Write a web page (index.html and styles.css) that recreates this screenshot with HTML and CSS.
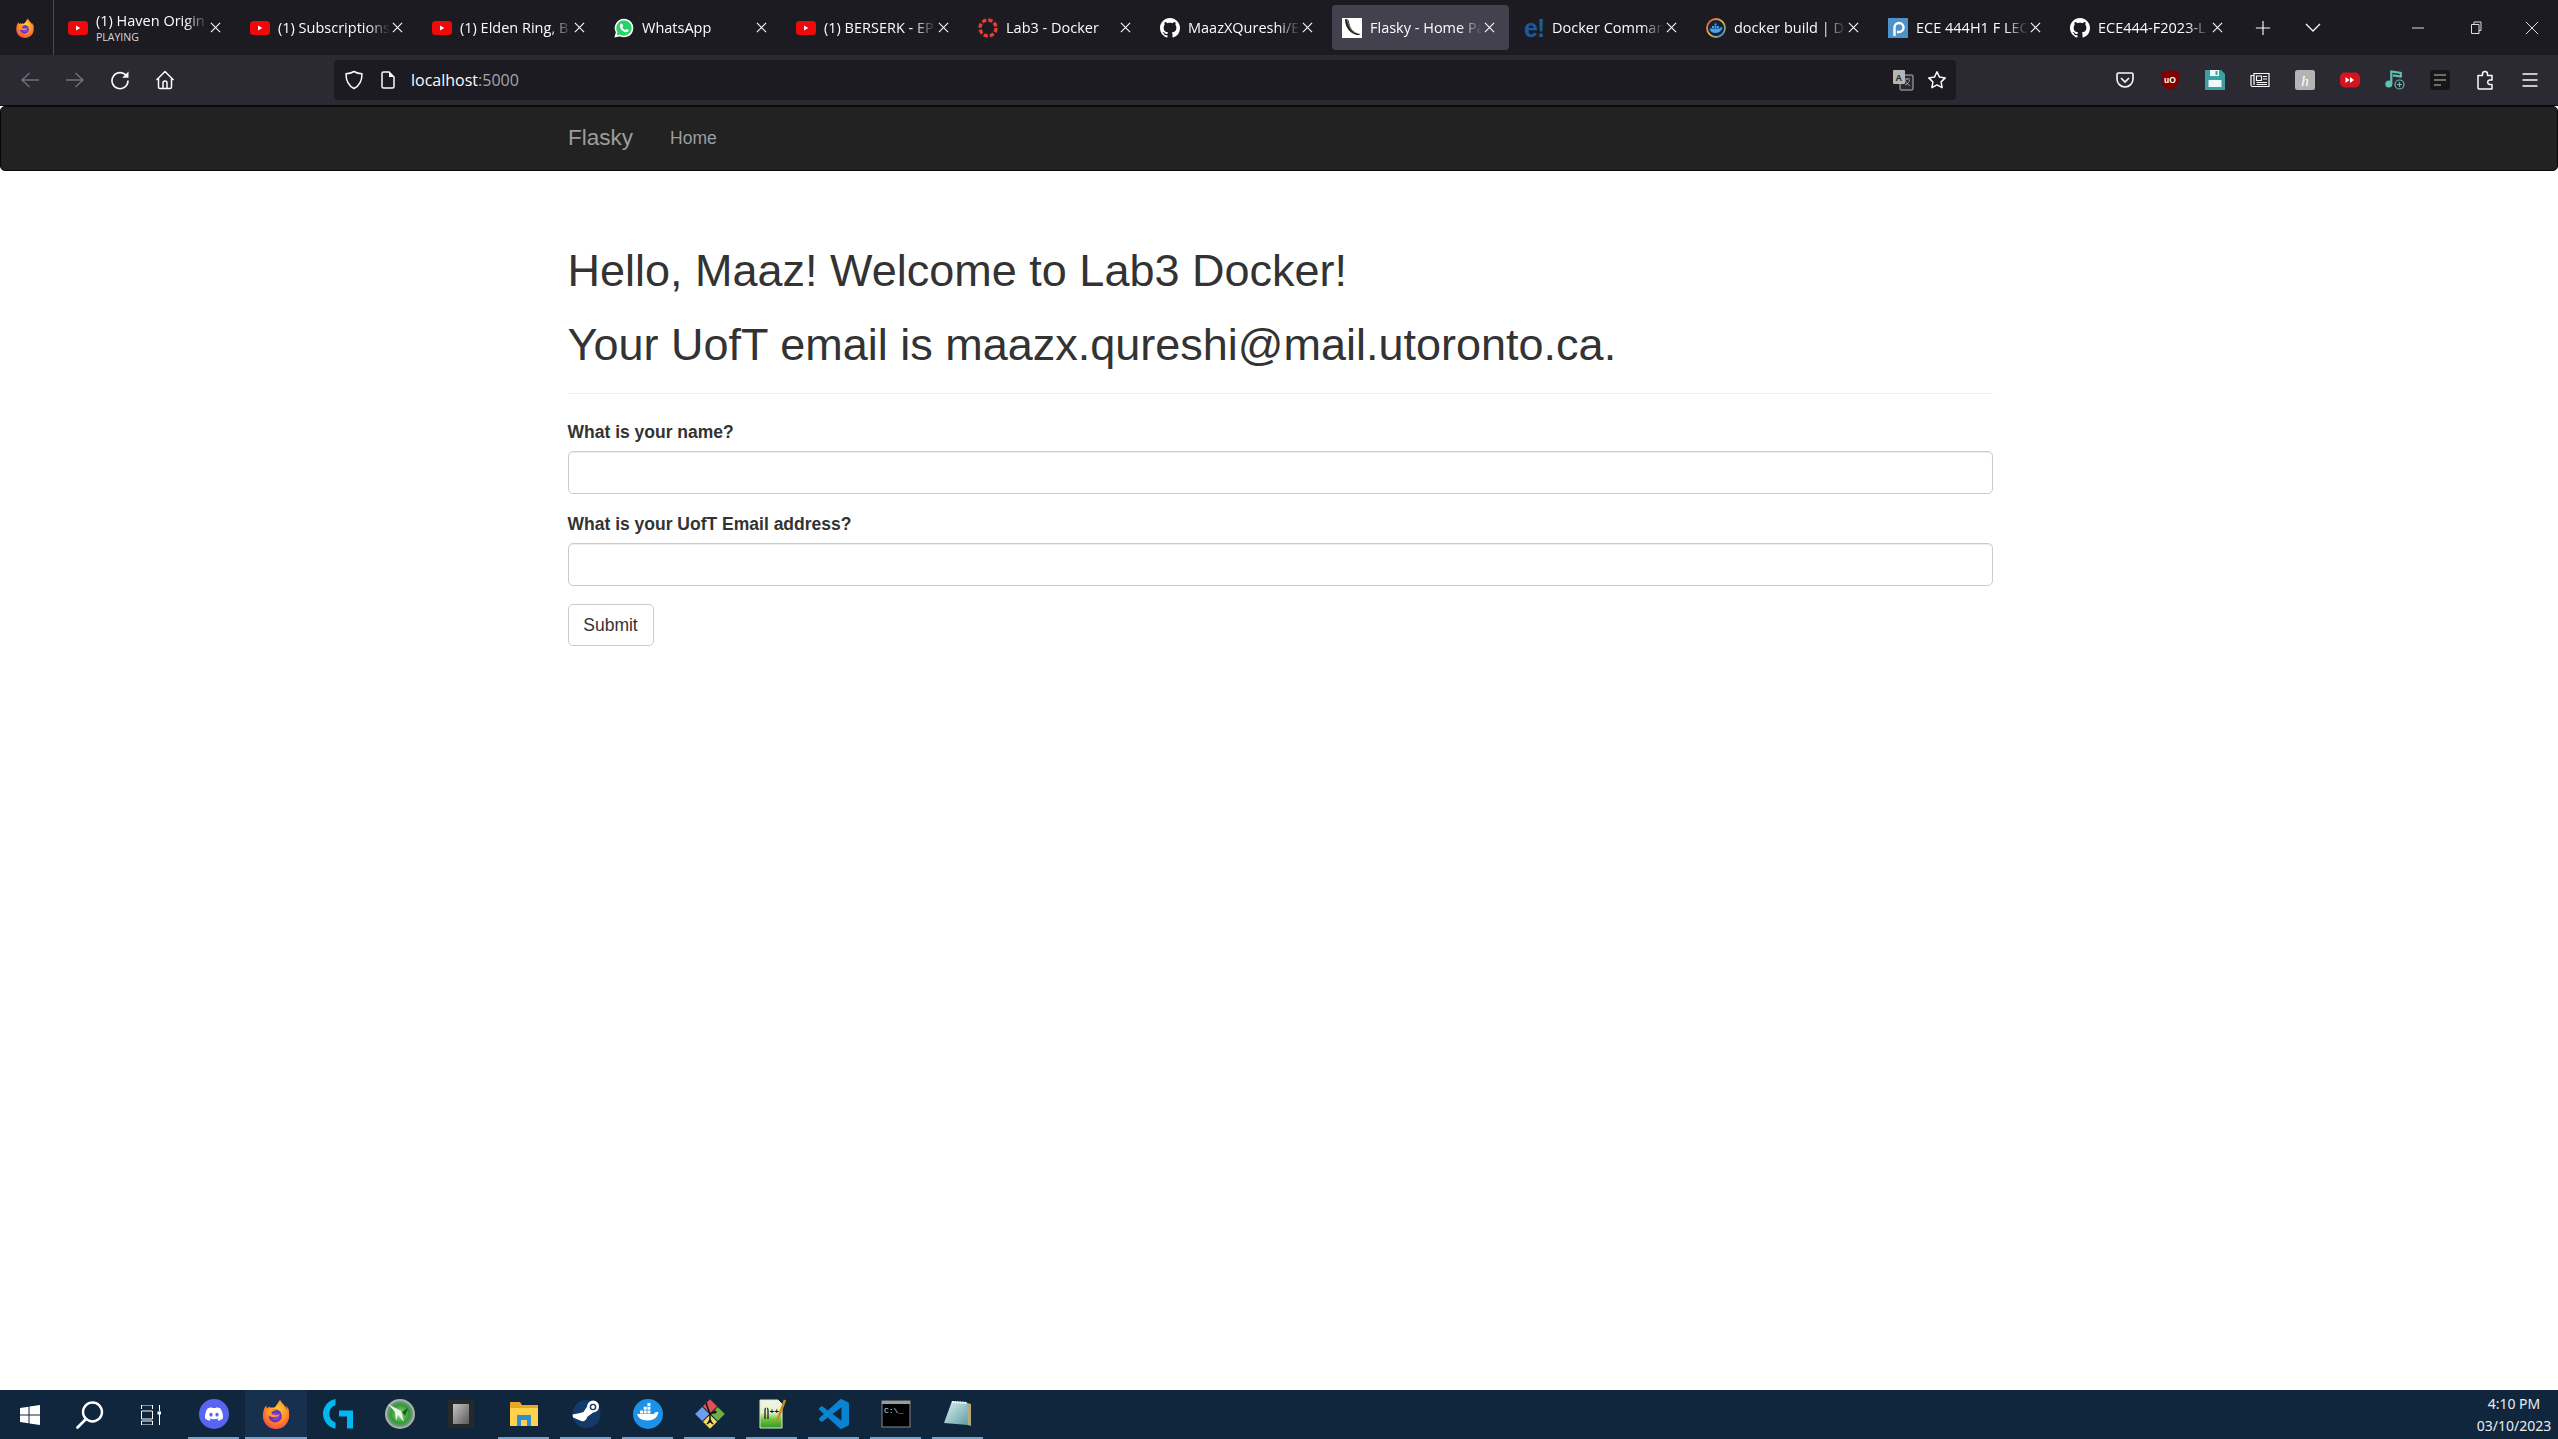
FILE: index.html
```html
<!DOCTYPE html>
<html lang="en">
<head>
<meta charset="utf-8">
<title>Flasky - Home Page</title>
<link rel="stylesheet" href="styles.css">
</head>
<body>
<svg class="defs" aria-hidden="true">
  <defs>
    <radialGradient id="ffg" cx="0.55" cy="0.35" r="0.8"><stop offset="0" stop-color="#ffd43a"/><stop offset="0.5" stop-color="#ff8a2a"/><stop offset="1" stop-color="#f0304c"/></radialGradient>
    <linearGradient id="nppg" x1="0" y1="0" x2="0" y2="1"><stop offset="0" stop-color="#f4f4e8"/><stop offset="0.45" stop-color="#e6f0c8"/><stop offset="0.7" stop-color="#6fc43a"/><stop offset="1" stop-color="#2f9a22"/></linearGradient>
    <linearGradient id="npg" x1="0" y1="0" x2="1" y2="1"><stop offset="0" stop-color="#dff2f2"/><stop offset="1" stop-color="#5f9ea6"/></linearGradient>
    <radialGradient id="xbg"><stop offset="0" stop-color="#9be86a"/><stop offset="0.65" stop-color="#2f9a3a"/><stop offset="1" stop-color="#8a9a92"/></radialGradient>
    <linearGradient id="chipg" x1="0" y1="0" x2="1" y2="1"><stop offset="0" stop-color="#c4c4c4"/><stop offset="1" stop-color="#5a5a5a"/></linearGradient>
    <linearGradient id="dockring" x1="0" y1="0" x2="1" y2="1"><stop offset="0" stop-color="#e8503a"/><stop offset="0.5" stop-color="#f2b234"/><stop offset="1" stop-color="#2f8fe0"/></linearGradient>
    <symbol id="firefox" viewBox="0 0 32 32">
      <path fill="url(#ffg)" d="M29.6 11.200c-.6-1.500-1.900-3.200-3-3.800.8 1.600 1.300 3.100 1.400 4.300-1.700-4.300-4.600-6-7-9.700-.1-.2-.3-.4-.4-.700-.1-.1-.1-.2-.2-.4 0 0 0 0 0 0C17.300 4.300 16.800 8.300 13.600 9.200c-1.300-.4-2.800-.3-3.900.2-.3-.4-.5-.9-.6-1.500-1.100.5-1.900 1.400-2.500 2.200-.6-.8-.8-2.100-.8-3.200C3.800 8.300 2.700 11.300 2.300 14.800 2 16 1.900 17 2 18c0 7.700 6.300 14 14 14s14-6.300 14-14c0-2.400-.2-4.700-.4-6.800z"/>
      <circle cx="15.200" cy="18" r="7" fill="#6a33b8"/>
      <circle cx="15.800" cy="18.600" r="4" fill="#8f3fd0"/>
      <path fill="#ff9a2a" d="M6 15c3-4 8-5 11-3-3 0-5 1-6 3 2 3 6 3 9 1-.5 2-2 3-4 3-5 1-9-1-10-4z"/>
    </symbol>
    <symbol id="yt" viewBox="0 0 20 14">
      <rect width="20" height="14" rx="3.500" fill="#ee0a0a"/>
      <path d="M8 4.500v5l4.300-2.500z" fill="#fff"/>
    </symbol>
    <symbol id="gh" viewBox="0 0 16 16">
      <path fill="#fff" d="M8 0C3.580 0 0 3.580 0 8c0 3.540 2.290 6.530 5.470 7.590.4.070.55-.17.55-.38 0-.19-.01-.82-.01-1.490-2.010.37-2.530-.49-2.690-.94-.09-.23-.48-.94-.82-1.130-.28-.15-.68-.52-.01-.53.63-.01 1.080.58 1.230.82.72 1.210 1.870.87 2.330.66.07-.52.28-.87.51-1.070-1.780-.2-3.640-.89-3.640-3.950 0-.87.31-1.590.82-2.150-.08-.2-.36-1.020.08-2.120 0 0 .67-.21 2.200.82.64-.18 1.320-.27 2-.27.68 0 1.360.09 2 .27 1.530-1.040 2.200-.82 2.200-.82.44 1.100.16 1.920.08 2.120.51.56.82 1.270.82 2.150 0 3.070-1.870 3.750-3.650 3.950.29.25.54.73.54 1.480 0 1.070-.01 1.930-.01 2.200 0 .21.15.46.55.38A8.013 8.013 0 0016 8c0-4.420-3.580-8-8-8z"/>
    </symbol>
    <symbol id="x" viewBox="0 0 12 12">
      <path d="M1 1l10 10M11 1L1 11" stroke="#fbfbfe" stroke-width="1.200" fill="none"/>
    </symbol>
  </defs>
</svg>

<header class="browser">
  <div class="tabstrip">
    <div class="ff-cell"><svg class="ic20"><use href="#firefox"/></svg></div>
    <div class="tabs">
      <div class="tab">
        <svg class="fav yt"><use href="#yt"/></svg>
        <div class="title-stack"><span class="title">(1) Haven Origin</span><span class="sub">PLAYING</span></div>
        <svg class="close"><use href="#x"/></svg>
      </div>
      <div class="tab"><svg class="fav yt"><use href="#yt"/></svg><span class="title">(1) Subscriptions</span><svg class="close"><use href="#x"/></svg></div>
      <div class="tab"><svg class="fav yt"><use href="#yt"/></svg><span class="title">(1) Elden Ring, B</span><svg class="close"><use href="#x"/></svg></div>
      <div class="tab">
        <svg class="fav" viewBox="0 0 20 20"><path fill="#25d366" stroke="#fff" stroke-width="1.600" d="M10 1.500a8.500 8.500 0 0 0-7.300 12.800L1.500 18.500l4.300-1.100A8.500 8.500 0 1 0 10 1.500z"/><path fill="#fff" d="M7.300 5.500c-.5 0-1.500 1-1.500 2.500 0 2.800 3.500 6.300 6.500 6.300 1.400 0 2.400-1 2.400-2 0-.4-2-1.300-2.300-1.300-.4 0-.8 1-1.200 1-.8 0-2.800-1.900-2.800-2.700 0-.4.800-.9.800-1.300 0-.3-.8-2.500-1.900-2.500z"/></svg>
        <span class="title">WhatsApp</span><svg class="close"><use href="#x"/></svg>
      </div>
      <div class="tab"><svg class="fav yt"><use href="#yt"/></svg><span class="title">(1) BERSERK - EP</span><svg class="close"><use href="#x"/></svg></div>
      <div class="tab">
        <svg class="fav" viewBox="0 0 20 20"><circle cx="10" cy="10" r="8" fill="none" stroke="#e13f36" stroke-width="3.400" stroke-dasharray="4.300 2"/></svg>
        <span class="title">Lab3 - Docker</span><svg class="close"><use href="#x"/></svg>
      </div>
      <div class="tab"><svg class="fav"><use href="#gh"/></svg><span class="title">MaazXQureshi/E</span><svg class="close"><use href="#x"/></svg></div>
      <div class="tab active">
        <svg class="fav" viewBox="0 0 20 20"><rect width="20" height="20" fill="#fff"/><path d="M3 1c0 6 3 14 12 16 2 .4 3-.4 3-1-7-1-10-6-11-12-.4-2-1-3-4-3z" fill="#222"/><path d="M5 2c2 4 2 9 8 13" stroke="#888" fill="none"/></svg>
        <span class="title">Flasky - Home Pa</span><svg class="close"><use href="#x"/></svg>
      </div>
      <div class="tab"><span class="fav efav">e!</span><span class="title">Docker Comman</span><svg class="close"><use href="#x"/></svg></div>
      <div class="tab">
        <svg class="fav" viewBox="0 0 20 20"><circle cx="10" cy="10" r="9" fill="#12233c" stroke="url(#dockring)" stroke-width="1.800"/><path fill="#4aa3e8" d="M3.500 10.500h10c.5-1 1.500-1.500 3-1.200-.5 3-3 5.700-7 5.700-3.500 0-5.500-1.800-6-4.500zM6 8h2v2H6zM8.500 8h2v2h-2zM11 8h2v2h-2zM8.500 5.500h2v2h-2z"/></svg>
        <span class="title">docker build | Do</span><svg class="close"><use href="#x"/></svg>
      </div>
      <div class="tab">
        <svg class="fav" viewBox="0 0 20 20"><rect width="20" height="20" fill="#4d93c9"/><path d="M6.500 18V9.500a4.500 4.500 0 1 1 4.500 4.500H9" fill="none" stroke="#fff" stroke-width="2.400"/></svg>
        <span class="title">ECE 444H1 F LEC</span><svg class="close"><use href="#x"/></svg>
      </div>
      <div class="tab"><svg class="fav"><use href="#gh"/></svg><span class="title">ECE444-F2023-L</span><svg class="close"><use href="#x"/></svg></div>
    </div>
    <div class="strip-btn plus"><svg viewBox="0 0 18 18"><path d="M9 1v16M1 9h16" stroke="#fbfbfe" stroke-width="1.300"/></svg></div>
    <div class="strip-btn chev"><svg viewBox="0 0 16 10"><path d="M1 1l7 7 7-7" fill="none" stroke="#fbfbfe" stroke-width="1.300"/></svg></div>
    <div class="win-ctrls">
      <svg viewBox="0 0 14 14"><path d="M1 7h12" stroke="#ddd" stroke-width="1"/></svg>
      <svg viewBox="0 0 14 14"><path d="M3.500 3.500h7.500v9H3.500zM6 3.500V1h7v8.500h-2" fill="none" stroke="#ddd" stroke-width="1"/></svg>
      <svg viewBox="0 0 14 14"><path d="M1 1l12 12M13 1L1 13" stroke="#ddd" stroke-width="1"/></svg>
    </div>
  </div>

  <div class="toolbar">
    <div class="nav-btns">
      <div class="tb-btn"><svg viewBox="0 0 20 20"><path d="M19 10H2M9.500 3L2 10l7.500 7" fill="none" stroke="#73727b" stroke-width="1.400"/></svg></div>
      <div class="tb-btn"><svg viewBox="0 0 20 20"><path d="M1 10h17M10.500 3L18 10l-7.500 7" fill="none" stroke="#73727b" stroke-width="1.400"/></svg></div>
      <div class="tb-btn"><svg viewBox="0 0 20 20"><path d="M16.500 6A8 8 0 1 0 18 10.500" fill="none" stroke="#fbfbfe" stroke-width="1.600"/><path d="M18.500 1.500v6.300h-6.300z" fill="#fbfbfe"/></svg></div>
      <div class="tb-btn"><svg viewBox="0 0 20 20"><path d="M1.500 10L10 1.500 18.500 10M3.500 8.500V17a1.500 1.500 0 0 0 1.500 1.500h10a1.500 1.500 0 0 0 1.500-1.500V8.500M8 18.500V13a2 2 0 0 1 4 0v5.500" fill="none" stroke="#fbfbfe" stroke-width="1.500" stroke-linejoin="round"/></svg></div>
    </div>
    <div class="urlbar">
      <svg class="url-ic" viewBox="0 0 20 20"><path d="M10 1.500c2.500 1.600 5 2.200 8 2.300 0 6.500-2 11.800-8 14.700C4 15.600 2 10.300 2 3.800c3-.1 5.500-.7 8-2.300z" fill="none" stroke="#fbfbfe" stroke-width="1.500" stroke-linejoin="round"/></svg>
      <svg class="url-ic doc-ic" viewBox="0 0 20 20"><path d="M4 3.500A1.500 1.500 0 0 1 5.500 2H11l5 5v9.500a1.500 1.500 0 0 1-1.500 1.500h-9A1.500 1.500 0 0 1 4 16.500z" fill="none" stroke="#fbfbfe" stroke-width="1.500"/><path d="M11 2v5h5z" fill="#fbfbfe"/></svg>
      <span class="url"><span class="host">localhost</span><span class="port">:5000</span></span>
      <div class="url-right">
        <svg class="translate" viewBox="0 0 22 22"><rect x="8" y="6" width="13" height="15" rx="1" fill="#2b2a33" stroke="#b9b9b9"/><path d="M12 10h6M15 9v2M13 16c3-1 4-3 4.500-5M13 11c1 3 3 5 5 5.500" stroke="#9a9a9a" fill="none"/><rect x="1" y="1" width="12" height="14" rx="1" fill="#b5b5b5"/><text x="3.500" y="11.500" class="tr-a">A</text></svg>
        <svg class="star" viewBox="0 0 20 20"><path d="M10 1.800l2.500 5.300 5.800.8-4.200 4 1 5.800-5.100-2.800-5.100 2.800 1-5.800-4.200-4 5.800-.8z" fill="none" stroke="#fbfbfe" stroke-width="1.500" stroke-linejoin="round"/></svg>
      </div>
    </div>
    <div class="ext-btns">
      <div class="tb-btn"><svg viewBox="0 0 20 20"><path d="M3.500 3h13A1.500 1.500 0 0 1 18 4.500V9a8 8 0 0 1-16 0V4.500A1.500 1.500 0 0 1 3.500 3z" fill="none" stroke="#fbfbfe" stroke-width="1.600"/><path d="M6 8l4 4 4-4" fill="none" stroke="#fbfbfe" stroke-width="1.600"/></svg></div>
      <div class="tb-btn"><svg viewBox="0 0 20 20"><path d="M10 0l9 2.500v7c0 5-4 9-9 10.500-5-1.500-9-5.500-9-10.500v-7z" fill="#800000"/><text x="10" y="12.500" class="uo">uO</text></svg></div>
      <div class="tb-btn"><svg viewBox="0 0 20 20"><path d="M0 0h16l4 4v16H0z" fill="#3aa0a4"/><path d="M3.500 10h13v7h-13z" fill="#eefafa"/><path d="M5 0h9v6H5z" fill="#eefafa"/><path d="M10.500 1h2v4h-2z" fill="#3aa0a4"/></svg></div>
      <div class="tb-btn"><svg viewBox="0 0 20 20"><path d="M4 3.500h15v13H2.500A1.500 1.500 0 0 1 1 15V5.500h3zM4 5v10" fill="none" stroke="#fbfbfe" stroke-width="1.200"/><path d="M6.500 6h5v4.500h-5zM13 6.500h4M13 9h4M6.500 12.500h10.500M6.500 14.500h10.500" fill="none" stroke="#fbfbfe" stroke-width="1.100"/></svg></div>
      <div class="tb-btn"><svg viewBox="0 0 20 20"><rect width="20" height="20" rx="2.500" fill="#b4b4b4"/><text x="10" y="15.500" class="kay">h</text></svg></div>
      <div class="tb-btn"><svg viewBox="0 0 20 20"><rect y="2.500" width="20" height="15" rx="5" fill="#d7141e"/><path d="M5.500 7l4 3-4 3zM10 7l4 3-4 3z" fill="#fff"/></svg></div>
      <div class="tb-btn"><svg viewBox="0 0 20 20"><circle cx="3.800" cy="14" r="3.500" fill="#5fc0b4"/><path d="M6.300 14V1.500l9.500 1.500v3.500L8 5.300" fill="none" stroke="#5fc0b4" stroke-width="2.200"/><circle cx="14.500" cy="14.500" r="4.500" fill="#2b2a33" stroke="#5fc0b4" stroke-width="1.200"/><path d="M14.500 12v5M12 14.500h5" stroke="#5fc0b4" stroke-width="1.200"/></svg></div>
      <div class="tb-btn"><svg viewBox="0 0 20 20"><rect width="20" height="20" rx="3" fill="#161618"/><path d="M4 5h12M4 10h12M4 15h7" stroke="#6c6c6c" stroke-width="2"/></svg></div>
      <div class="tb-btn"><svg viewBox="0 0 20 20"><path d="M3 5.500h4.500V4a2.500 2.500 0 0 1 5 0v1.500H17V18a1 1 0 0 1-1 1H3.500a1 1 0 0 1-.5-.2v-4.300h2.500a2.300 2.300 0 0 0 0-4.500H3z" transform="matrix(-1 0 0 1 20 0)" fill="none" stroke="#fbfbfe" stroke-width="1.500" stroke-linejoin="round"/></svg></div>
      <div class="tb-btn"><svg viewBox="0 0 20 20"><path d="M2.500 4h15M2.500 10h15M2.500 16h15" stroke="#fbfbfe" stroke-width="1.500"/></svg></div>
    </div>
  </div>
</header>

<div class="page">
  <nav class="navbar">
    <a class="brand">Flasky</a>
    <a class="nav-link">Home</a>
  </nav>
  <main class="container">
    <div class="page-header">
      <h1>Hello, Maaz! Welcome to Lab3 Docker!</h1>
      <h1>Your UofT email is maazx.qureshi@mail.utoronto.ca.</h1>
    </div>
    <form class="form">
      <div class="form-group">
        <label for="name">What is your name?</label>
        <input id="name" class="form-control" type="text">
      </div>
      <div class="form-group">
        <label for="email">What is your UofT Email address?</label>
        <input id="email" class="form-control" type="text">
      </div>
      <button class="btn" type="button">Submit</button>
    </form>
  </main>
</div>

<footer class="taskbar">
  <div class="sys-cell"><svg class="win" viewBox="0 0 20 20"><path fill="#fff" d="M0 3l8.500-1.200V9.500H0zM9.500 1.600L20 0v9.500H9.500zM0 10.500h8.500v7.700L0 17zM9.500 10.500H20V20L9.500 18.400z"/></svg></div>
  <div class="sys-cell"><svg class="search" viewBox="0 0 28 28"><circle cx="16.500" cy="11" r="9.500" fill="none" stroke="#fff" stroke-width="2.400"/><path d="M10 18L1.500 26.500" stroke="#fff" stroke-width="2.800" stroke-linecap="round"/></svg></div>
  <div class="sys-cell"><svg class="tview" viewBox="0 0 20 20"><path d="M1 0v4M1 0h11M12 0v4M1 6h11v8H1zM1 16v4M1 16h11M12 16v4M1 20h11M19 0v6M19 9v11" fill="none" stroke="#fff" stroke-width="1"/><rect x="17" y="6.500" width="3.500" height="3" fill="#fff"/></svg></div>
  <div class="app open"><svg viewBox="0 0 30 30"><circle cx="15" cy="15" r="15" fill="#5865f2"/><g transform="translate(6 6) scale(.75)"><path fill="#fff" d="M20.317 4.370a19.791 19.791 0 00-4.885-1.515.074.074 0 00-.079.037c-.211.375-.445.865-.608 1.250-1.845-.276-3.680-.276-5.487 0-.164-.393-.406-.874-.618-1.250a.077.077 0 00-.079-.037 19.736 19.736 0 00-4.885 1.515.070.070 0 00-.032.028C.533 9.046-.319 13.580.099 18.058a.082.082 0 00.031.056c2.053 1.508 4.041 2.423 5.993 3.029a.078.078 0 00.084-.028c.462-.630.873-1.295 1.226-1.994a.076.076 0 00-.042-.106c-.653-.248-1.274-.549-1.872-.892a.077.077 0 01-.008-.128c.126-.094.252-.192.372-.291a.074.074 0 01.078-.011c3.928 1.793 8.180 1.793 12.061 0a.074.074 0 01.079.010c.120.099.246.198.373.292a.077.077 0 01-.007.128c-.598.349-1.219.645-1.873.891a.077.077 0 00-.041.107c.360.698.772 1.363 1.225 1.993a.076.076 0 00.084.029c1.961-.607 3.950-1.522 6.002-3.029a.077.077 0 00.031-.055c.500-5.177-.838-9.674-3.548-13.660a.061.061 0 00-.031-.029zM8.020 15.331c-1.183 0-2.157-1.086-2.157-2.419 0-1.333.956-2.419 2.157-2.419 1.211 0 2.176 1.095 2.157 2.419 0 1.333-.956 2.419-2.157 2.419zm7.975 0c-1.183 0-2.157-1.086-2.157-2.419 0-1.333.955-2.419 2.157-2.419 1.211 0 2.176 1.095 2.157 2.419 0 1.333-.946 2.419-2.157 2.419z"/></g></svg></div>
  <div class="app active"><svg><use href="#firefox"/></svg></div>
  <div class="app"><svg viewBox="0 0 30 30"><path fill="#00b8f0" d="M12.500 0v6.200C9 7 6.300 10.500 6.300 14.500c0 4.700 3 8 6.200 9v6.200C5.500 28.500 0 22 0 14.700 0 7.300 5.500 1.300 12.500 0z"/><path fill="#00b8f0" d="M16 11.500h14V29.500h-6V17.500h-8z"/></svg></div>
  <div class="app"><svg viewBox="0 0 30 30"><circle cx="15" cy="15" r="14" fill="url(#xbg)"/><circle cx="15" cy="15" r="14" fill="none" stroke="#a8b0aa" stroke-width="2"/><path fill="#f2f2f2" d="M3 5l13 7 3 11-6-7-2 6-1-9z"/><path fill="#1c5c2a" d="M17 13l6-4-3 8z"/></svg></div>
  <div class="app"><svg viewBox="0 0 30 30"><rect x="1" y="1" width="26" height="28" fill="#26292a"/><rect x="6" y="5" width="16" height="20" fill="url(#chipg)"/></svg></div>
  <div class="app open"><svg viewBox="0 0 30 30"><path fill="#e8a820" d="M1 3h10l2 3h16v20H1z"/><path fill="#ffd24d" d="M1 9h28v18H1z"/><path fill="#2f8fd6" d="M8 16h14v11h-4v-6h-6v6H8z"/></svg></div>
  <div class="app open"><svg viewBox="0 0 30 30"><circle cx="15.500" cy="15" r="14" fill="#143a6a"/><path fill="#fff" d="M1.500 15.500a14 14 0 0 0 .6 3l7 3a4.500 4.500 0 0 0 7-3.500l6-4.500a6 6 0 1 0-6-6l-3.800 5.700a4.500 4.500 0 0 0-3 .8z"/><circle cx="22" cy="8" r="3.300" fill="#143a6a"/><circle cx="22" cy="8" r="1.900" fill="#fff"/></svg></div>
  <div class="app open"><svg viewBox="0 0 30 30"><circle cx="15" cy="15" r="15" fill="#1d91e8"/><path fill="#fff" d="M4 15h17c.4-1.500 2-2.300 4.500-1.800-1 4-3.500 8.300-11 8.300-6 0-9.500-2.800-10.500-6.500z"/><path fill="#fff" d="M7 11.500h3v3H7zM10.700 11.500h3v3h-3zM14.400 11.500h3v3h-3zM10.700 7.800h3v3h-3zM14.400 7.800h3v3h-3zM14.400 4.100h3v3h-3z"/></svg></div>
  <div class="app open"><svg viewBox="0 0 30 30"><g transform="rotate(45 15 15)"><rect x="4.500" y="4.500" width="10" height="10" fill="#e0505c"/><rect x="15.500" y="4.500" width="10" height="10" fill="#6fae45"/><rect x="15.500" y="15.500" width="10" height="10" fill="#f6d860"/><rect x="4.500" y="15.500" width="10" height="10" fill="#6f9cf0"/></g><path d="M11 4l4 11 5-2M15 15v7M15 22l-3 3M15 22l3 3" fill="none" stroke="#111" stroke-width="1.500"/><circle cx="20" cy="13" r="1.600" fill="#111"/><circle cx="15" cy="22" r="1.600" fill="#111"/></svg></div>
  <div class="app open"><svg viewBox="0 0 30 30"><path fill="url(#nppg)" stroke="#dfe6d0" d="M3 1h18l4 4v24H3z"/><path d="M9 9c-1 0-1 1-1 2v9M10 9c1 0 1 1 1 2v9" stroke="#111" fill="none" stroke-width="1.200"/><text x="12.500" y="15" class="npp">++</text><path d="M20 22L28 1" stroke="#c09020" stroke-width="2.500"/></svg></div>
  <div class="app open"><svg viewBox="0 0 24 24"><path fill="#0a84d0" d="M23.150 2.587L18.210.21a1.494 1.494 0 0 0-1.705.29l-9.460 8.630-4.120-3.128a.999.999 0 0 0-1.276.057L.327 7.261A1 1 0 0 0 .326 8.740L3.899 12 .326 15.260a1 1 0 0 0 .001 1.479L1.650 17.940a.999.999 0 0 0 1.276.057l4.120-3.128 9.460 8.630a1.492 1.492 0 0 0 1.704.29l4.942-2.377A1.500 1.500 0 0 0 24 20.060V3.939a1.500 1.500 0 0 0-.85-1.352zm-5.146 14.861L10.826 12l7.178-5.448v10.896z"/></svg></div>
  <div class="app open"><svg viewBox="0 0 30 30"><rect x="1" y="2" width="28" height="26" fill="#000" stroke="#8a8a8a"/><rect x="1" y="2" width="28" height="3" fill="#9a9a9a"/><text x="3" y="14" class="cmd">C:\_</text></svg></div>
  <div class="app open"><svg viewBox="0 0 30 30"><path fill="#b9a878" d="M21 3l7 2 0 22-6-2z"/><path fill="url(#npg)" d="M9 2l15 1 1 23-24-2z"/><path d="M9 3l14 1" stroke="#f4ffff" stroke-width="2" stroke-dasharray="1.500 1"/></svg></div>
  <div class="clock"><span>4:10 PM</span><span>03/10/2023</span></div>
</footer>
</body>
</html>
```
FILE: styles.css
```css
* { box-sizing: border-box; }
html, body { margin: 0; padding: 0; height: 100%; overflow: hidden; }
body {
  display: flex;
  flex-direction: column;
  height: 1439px;
  background: #fff;
  font-family: "Liberation Sans", Arial, sans-serif;
  color: #333;
}
.defs { position: absolute; width: 0; height: 0; }

/* Browser chrome */
.browser { flex: 0 0 auto; font-family: "Open Sans", "Noto Sans", sans-serif; color: #fbfbfe; }
.tabstrip { display: flex; align-items: center; height: 55px; background: #1c1b22; }
.ff-cell { flex: 0 0 54px; height: 55px; display: flex; align-items: center; justify-content: center; border-right: 1px solid #4a4950; padding-right: 3px; }
.ic20 { width: 20px; height: 20px; }
.tabs { display: flex; gap: 5px; margin-left: 4px; }
.tab { position: relative; flex: 0 0 177px; height: 45px; display: flex; align-items: center; padding-left: 10px; border-radius: 4px; }
.tab.active { background: #42414d; }
.fav { flex: 0 0 20px; width: 20px; height: 20px; margin-right: 8px; }
.efav { font: bold 25px/20px "Liberation Sans", sans-serif; color: #1b5a9e; letter-spacing: -1px; }
.title {
  display: block;
  width: 112px;
  font-size: 14.5px;
  line-height: 20px;
  white-space: nowrap;
  -webkit-mask-image: linear-gradient(to right, #000 80%, transparent 100%);
  mask-image: linear-gradient(to right, #000 80%, transparent 100%);
}
.title-stack { display: flex; flex-direction: column; margin-top: -1px; }
.sub { font-size: 10.500px; line-height: 13px; color: #d8d8dc; }
.close { position: absolute; left: 152px; top: 17px; width: 11px; height: 11px; }

.strip-btn { display: flex; align-items: center; justify-content: center; }
.strip-btn svg { display: block; }
.plus { margin-left: 18px; width: 16px; height: 16px; }
.plus svg { width: 16px; height: 16px; }
.chev { margin-left: 34px; width: 16px; }
.chev svg { width: 16px; height: 10px; }
.win-ctrls { display: flex; gap: 43px; margin-left: auto; margin-right: 19px; }
.win-ctrls svg { width: 14px; height: 14px; }

.toolbar { display: flex; align-items: center; height: 51px; padding-bottom: 1px; background: #2b2a33; border-bottom: 1px solid #0c0c0d; }
.nav-btns { display: flex; padding-left: 7px; }
.tb-btn { flex: 0 0 45px; width: 45px; display: flex; align-items: center; justify-content: center; }
.tb-btn svg { width: 20px; height: 20px; display: block; }
.urlbar { display: flex; align-items: center; width: 1622px; height: 40px; margin-left: 147px; padding-left: 10px; background: #1c1b22; border-radius: 4px; }
.url-ic { width: 20px; height: 20px; flex: 0 0 20px; }
.doc-ic { margin-left: 14px; }
.url { margin-left: 13px; font-size: 16px; }
.port { color: #a5a5aa; }
.url-right { display: flex; align-items: center; gap: 13px; margin-left: auto; margin-right: 9px; }
.translate { width: 22px; height: 22px; }
.star { width: 20px; height: 20px; }
.ext-btns { display: flex; margin-left: 146px; }
.tr-a { font: bold 9px "Liberation Sans", sans-serif; fill: #222; }
.uo { font: bold 8.500px "Liberation Sans", sans-serif; fill: #fff; text-anchor: middle; }
.kay { font: italic 15px "Liberation Serif", serif; fill: #fff; text-anchor: middle; }
.npp { font: bold 8px "Liberation Mono", monospace; fill: #111; }
.cmd { font: 8px "Liberation Mono", monospace; fill: #ddd; }

/* Page */
.page { flex: 1 1 auto; min-height: 0; overflow: hidden; }
.navbar { display: flex; align-items: center; height: 65px; padding-left: 567px; padding-bottom: 1px; background: #222; border: 1px solid #080808; border-radius: 5px; color: #9d9d9d; }
.brand { font-size: 22.500px; }
.nav-link { margin-left: 37px; font-size: 17.500px; }
.container { width: 1425.500px; margin-left: 567.500px; }
.page-header { margin-top: 75px; padding-bottom: 23px; border-bottom: 1px solid #eee; }
h1 { margin: 0 0 24px; font-size: 45px; line-height: 50px; font-weight: 500; color: #333; }
h1:last-child { margin-bottom: 0; }
.form { margin-top: 26px; }
.form-group { margin-bottom: 18.500px; }
label { display: block; margin-bottom: 6px; font-size: 17.500px; line-height: 25px; font-weight: 700; color: #333; }
.form-control { display: block; width: 100%; height: 42.500px; padding: 0 15px; background: #fff; border: 1.500px solid #ccc; border-radius: 5px; box-shadow: inset 0 1px 1px rgba(0,0,0,.075); }
.btn { display: block; width: 86px; height: 42px; padding: 0; background: #fff; border: 1.500px solid #ccc; border-radius: 5px; font: 17.500px "Liberation Sans", sans-serif; color: #333; }

/* Taskbar */
.taskbar { flex: 0 0 49px; display: flex; align-items: stretch; background: #10263c; }
.sys-cell { flex: 0 0 60px; display: flex; align-items: center; justify-content: center; }
.sys-cell:nth-child(3) { margin-right: 3px; }
.win { width: 20px; height: 20px; }
.search { width: 28px; height: 28px; }
.tview { width: 21px; height: 20px; }
.app { position: relative; flex: 0 0 62px; display: flex; align-items: center; justify-content: center; padding-bottom: 2px; }
.app svg { width: 30px; height: 30px; }
.app.open::after { content: ""; position: absolute; left: 5px; right: 6px; bottom: 0; height: 2px; background: #76a0c8; }
.app.active { background: #16304e; border-bottom: 2px solid #76a0c8; padding-bottom: 0; }
.clock { margin-left: auto; width: 88px; display: flex; flex-direction: column; align-items: center; justify-content: center; gap: 3px; font: 14px/19px "Noto Sans", sans-serif; color: #e8edf2; }
```
